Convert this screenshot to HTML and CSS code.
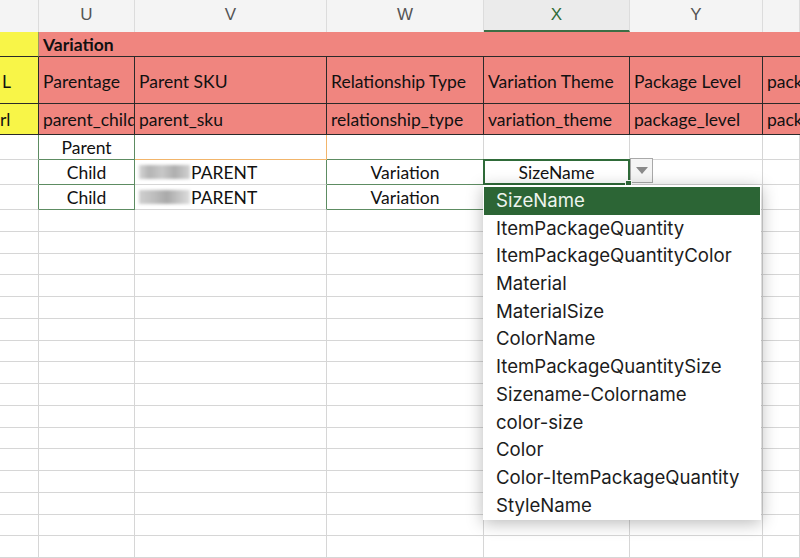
FILE: index.html
```html
<!DOCTYPE html>
<html lang="en">
<head>
    <meta charset="UTF-8">
    <meta name="viewport" content="width=device-width, initial-scale=1.0">
    <title>Variation Sheet</title>
    <link rel="stylesheet" href="styles.css">
</head>
<body>

    <div class="sheet">
        <!-- Column letters -->
        <div class="row head">
            <div class="cell"></div>
            <div class="cell">U</div>
            <div class="cell">V</div>
            <div class="cell">W</div>
            <div class="cell active">X</div>
            <div class="cell">Y</div>
            <div class="cell"></div>
        </div>

        <!-- Group title -->
        <div class="row group">
            <div class="cell yellow"></div>
            <div class="cell red wide">Variation</div>
        </div>

        <!-- Field labels -->
        <div class="row labels">
            <div class="cell yellow"><span class="tail">L</span></div>
            <div class="cell red">Parentage</div>
            <div class="cell red">Parent SKU</div>
            <div class="cell red">Relationship Type</div>
            <div class="cell red">Variation Theme</div>
            <div class="cell red">Package Level</div>
            <div class="cell red last">pack</div>
        </div>

        <!-- Field keys -->
        <div class="row keys">
            <div class="cell yellow"><span class="tail">rl</span></div>
            <div class="cell red">parent_child</div>
            <div class="cell red">parent_sku</div>
            <div class="cell red">relationship_type</div>
            <div class="cell red">variation_theme</div>
            <div class="cell red">package_level</div>
            <div class="cell red last">pack</div>
        </div>

        <!-- Data -->
        <div class="row data">
            <div class="cell g-right"></div>
            <div class="cell center g-right g-bottom">Parent</div>
            <div class="cell o-right o-bottom"></div>
            <div class="cell g-bottom"></div>
            <div class="cell no-bottom"></div>
            <div class="cell"></div>
            <div class="cell"></div>
        </div>
        <div class="row data">
            <div class="cell g-right"></div>
            <div class="cell center g-right g-bottom">Child</div>
            <div class="cell g-right"><span class="blur"></span>PARENT</div>
            <div class="cell center g-right g-bottom">Variation</div>
            <div class="cell center selected">
                SizeName
                <span class="handle"></span>
                <span class="drop-btn"><span class="arrow"></span></span>
                <ul class="dropdown">
                    <li class="picked">SizeName</li>
                    <li>ItemPackageQuantity</li>
                    <li>ItemPackageQuantityColor</li>
                    <li>Material</li>
                    <li>MaterialSize</li>
                    <li>ColorName</li>
                    <li>ItemPackageQuantitySize</li>
                    <li>Sizename-Colorname</li>
                    <li>color-size</li>
                    <li>Color</li>
                    <li>Color-ItemPackageQuantity</li>
                    <li>StyleName</li>
                </ul>
            </div>
            <div class="cell"></div>
            <div class="cell"></div>
        </div>
        <div class="row data">
            <div class="cell g-right"></div>
            <div class="cell center g-right g-bottom">Child</div>
            <div class="cell g-right"><span class="blur alt"></span>PARENT</div>
            <div class="cell center g-right g-bottom">Variation</div>
            <div class="cell"></div>
            <div class="cell"></div>
            <div class="cell"></div>
        </div>

        <!-- Empty rows -->
        <div class="row empty"><div class="cell"></div><div class="cell"></div><div class="cell"></div><div class="cell"></div><div class="cell"></div><div class="cell"></div><div class="cell"></div></div>
        <div class="row empty"><div class="cell"></div><div class="cell"></div><div class="cell"></div><div class="cell"></div><div class="cell"></div><div class="cell"></div><div class="cell"></div></div>
        <div class="row empty"><div class="cell"></div><div class="cell"></div><div class="cell"></div><div class="cell"></div><div class="cell"></div><div class="cell"></div><div class="cell"></div></div>
        <div class="row empty"><div class="cell"></div><div class="cell"></div><div class="cell"></div><div class="cell"></div><div class="cell"></div><div class="cell"></div><div class="cell"></div></div>
        <div class="row empty"><div class="cell"></div><div class="cell"></div><div class="cell"></div><div class="cell"></div><div class="cell"></div><div class="cell"></div><div class="cell"></div></div>
        <div class="row empty"><div class="cell"></div><div class="cell"></div><div class="cell"></div><div class="cell"></div><div class="cell"></div><div class="cell"></div><div class="cell"></div></div>
        <div class="row empty"><div class="cell"></div><div class="cell"></div><div class="cell"></div><div class="cell"></div><div class="cell"></div><div class="cell"></div><div class="cell"></div></div>
        <div class="row empty"><div class="cell"></div><div class="cell"></div><div class="cell"></div><div class="cell"></div><div class="cell"></div><div class="cell"></div><div class="cell"></div></div>
        <div class="row empty"><div class="cell"></div><div class="cell"></div><div class="cell"></div><div class="cell"></div><div class="cell"></div><div class="cell"></div><div class="cell"></div></div>
        <div class="row empty"><div class="cell"></div><div class="cell"></div><div class="cell"></div><div class="cell"></div><div class="cell"></div><div class="cell"></div><div class="cell"></div></div>
        <div class="row empty"><div class="cell"></div><div class="cell"></div><div class="cell"></div><div class="cell"></div><div class="cell"></div><div class="cell"></div><div class="cell"></div></div>
        <div class="row empty"><div class="cell"></div><div class="cell"></div><div class="cell"></div><div class="cell"></div><div class="cell"></div><div class="cell"></div><div class="cell"></div></div>
        <div class="row empty"><div class="cell"></div><div class="cell"></div><div class="cell"></div><div class="cell"></div><div class="cell"></div><div class="cell"></div><div class="cell"></div></div>
        <div class="row empty"><div class="cell"></div><div class="cell"></div><div class="cell"></div><div class="cell"></div><div class="cell"></div><div class="cell"></div><div class="cell"></div></div>
        <div class="row empty"><div class="cell"></div><div class="cell"></div><div class="cell"></div><div class="cell"></div><div class="cell"></div><div class="cell"></div><div class="cell"></div></div>
        <div class="row empty"><div class="cell"></div><div class="cell"></div><div class="cell"></div><div class="cell"></div><div class="cell"></div><div class="cell"></div><div class="cell"></div></div>
    </div>

</body>
</html>
```

FILE: styles.css
```css
body {
    margin: 0;
    padding: 0;
    background-color: #fff;
    overflow: hidden;
    font-family: Lato, "Liberation Sans", sans-serif;
    color: #111;
}

.sheet {
    width: 800px;
    height: 558px;
    overflow: hidden;
}

.row {
    display: grid;
    grid-template-columns: 39px 96px 192px 157px 146px 133px 37px;
}

.cell {
    box-sizing: border-box;
    border-right: 1px solid #d6d6d6;
    border-bottom: 1px solid #d6d6d6;
    font-size: 17.5px;
    padding: 0 4px;
    white-space: nowrap;
    overflow: hidden;
    display: flex;
    align-items: center;
}

/* Column letters */
.head {
    height: 32px;
}

.head .cell {
    background-color: #f4f4f4;
    border-right: 1px solid #dcdcdc;
    border-bottom: none;
    justify-content: center;
    font-family: "Liberation Sans", sans-serif;
    font-size: 17px;
    color: #555;
    padding-bottom: 2px;
}

.head .active {
    background-color: #ebebeb;
    color: #2f6b39;
    border-bottom: 2px solid #3c6e45;
    padding-bottom: 0;
}

/* Coloured title rows */
.group {
    height: 25px;
}

.labels {
    height: 47px;
}

.keys {
    height: 31px;
}

.yellow {
    background-color: #f8f548;
    padding: 0;
}

.red {
    background-color: #f0857f;
}

.group .yellow {
    border-right: 1px solid #9a9a60;
    border-bottom: 1px solid #2a2a2a;
}

.wide {
    grid-column: 2 / -1;
    font-weight: bold;
    border-right: none;
    border-bottom: 1px solid #2a2a2a;
}

.labels .cell, .keys .cell {
    border-right: 1px solid #2a2a2a;
    border-bottom: 1px solid #2a2a2a;
}

.labels .cell {
    padding-top: 2px;
}

.keys .cell {
    padding-top: 1px;
}

.cell.last {
    border-right: none;
}

.tail {
    margin-left: 2px;
}

.keys .tail {
    margin-left: 0;
}

/* Data rows */
.data {
    height: 25px;
}

.empty {
    height: 21.75px;
}

.center {
    justify-content: center;
}

.g-right {
    border-right-color: #5d8c62;
}

.g-bottom {
    border-bottom-color: #5d8c62;
}

.o-right {
    border-right-color: #f2b56b;
}

.o-bottom {
    border-bottom-color: #f2b56b;
}

.no-bottom {
    border-bottom-color: transparent;
}

.blur {
    display: inline-block;
    width: 51px;
    height: 14px;
    margin-right: 1px;
    background: linear-gradient(90deg, #d6d6d6 0%, #b4b4b4 20%, #c8c8c8 45%, #aeaeae 70%, #d2d2d2 100%);
    filter: blur(1.5px);
}

.blur.alt {
    background: linear-gradient(90deg, #cfcfcf 0%, #bdbdbd 30%, #a9a9a9 55%, #c6c6c6 80%, #dedede 100%);
}

/* Selected cell with list validation */
.selected {
    position: relative;
    overflow: visible;
    border-right-color: transparent;
    border-bottom-color: transparent;
}

.selected::after {
    content: "";
    position: absolute;
    top: -1px;
    left: -1px;
    right: -1px;
    bottom: -1px;
    border: 2px solid #2f6b39;
}

.handle {
    position: absolute;
    right: -3px;
    bottom: -3px;
    width: 5px;
    height: 5px;
    background-color: #2f6b39;
    border: 1px solid #fff;
    z-index: 2;
}

.drop-btn {
    position: absolute;
    left: calc(100% + 1px);
    top: -2px;
    width: 23px;
    height: 25px;
    box-sizing: border-box;
    background-color: #f5f5f5;
    border: 1px solid #a9a9a9;
    display: flex;
    align-items: center;
    justify-content: center;
    z-index: 1;
}

.arrow {
    width: 0;
    height: 0;
    border-left: 6px solid transparent;
    border-right: 6px solid transparent;
    border-top: 7px solid #8a8a8a;
}

.dropdown {
    position: absolute;
    top: 25px;
    left: -1px;
    width: 276px;
    margin: 0;
    padding: 2px 1px 1px;
    list-style: none;
    background-color: #fff;
    box-shadow: 0 3px 16px rgba(0, 0, 0, 0.28);
    font-family: Inter, "Liberation Sans", sans-serif;
    font-size: 18.6px;
    color: #1c1c1c;
    z-index: 3;
}

.dropdown li {
    height: 27.7px;
    line-height: 27.7px;
    padding-left: 12px;
}

.dropdown li.picked {
    background-color: #2c6535;
    color: #eef4ee;
}
```
